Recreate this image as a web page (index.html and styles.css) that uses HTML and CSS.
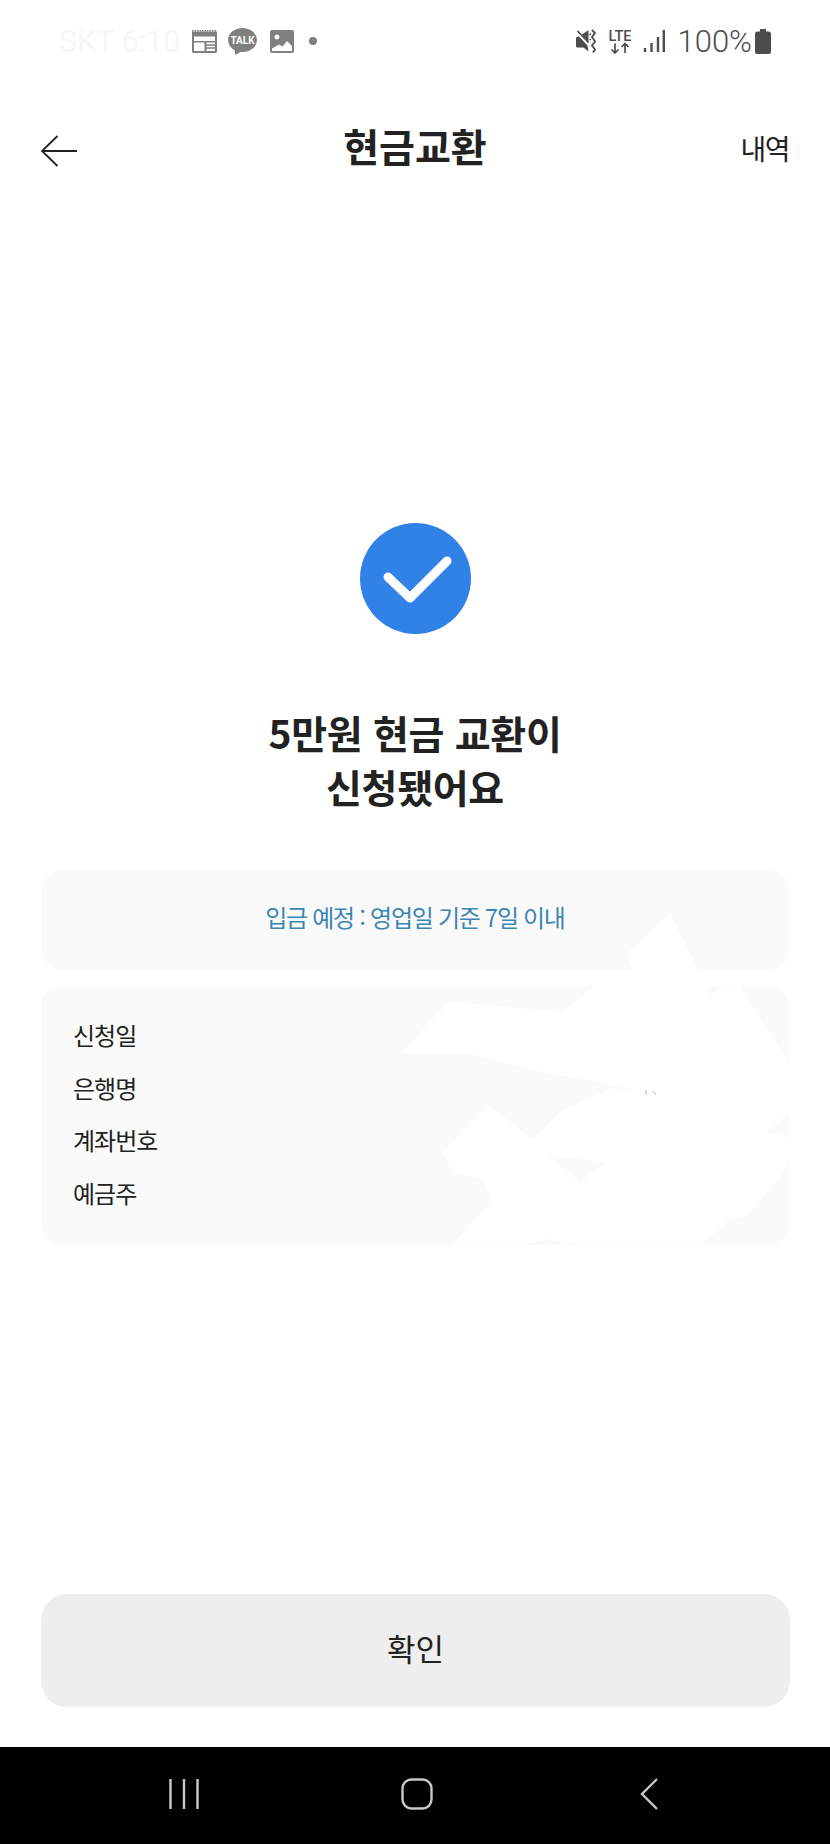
FILE: index.html
```html
<!DOCTYPE html>
<html lang="ko">
<head>
<meta charset="UTF-8">
<meta name="viewport" content="width=device-width, initial-scale=1.0">
<title>현금교환</title>
<link rel="stylesheet" href="styles.css">
</head>
<body>
<div class="screen">
  <div class="status-bar">
    <div class="status-left">
      <span class="carrier">SKT 6:10</span>
      <svg class="ic-cal" width="25" height="23" viewBox="0 0 25 23"><path fill="none" stroke="#808080" stroke-width="1.500" stroke-dasharray="1.500 1" d="M0 .8h25"/><path fill="#808080" fill-rule="evenodd" d="M0 1.500h25v20a1.500 1.500 0 0 1-1.500 1.500h-22A1.500 1.500 0 0 1 0 21.500zM2 6.500v4.500h21V6.500zM2 12.500v8.500h10.500v-8.500zM14.500 12.500v1.800H23v-1.800zM14.500 15.800v1.500H23v-1.500zM14.500 18.800V21H23v-2.200z"/></svg>
      <svg class="ic-talk" width="29" height="27" viewBox="0 0 29 27"><ellipse cx="14.500" cy="12" rx="14.500" ry="12" fill="#808080"/><path fill="#808080" d="M6 20l1.500 7 7-4.500z"/><text x="14.500" y="16" text-anchor="middle" class="talk">TALK</text></svg>
      <svg class="ic-img" width="24" height="23" viewBox="0 0 24 23"><path fill="#808080" fill-rule="evenodd" d="M2 0h20a2 2 0 0 1 2 2v19a2 2 0 0 1-2 2H2a2 2 0 0 1-2-2V2a2 2 0 0 1 2-2zM7 4.500a2.500 2.500 0 1 0 0 5 2.500 2.500 0 0 0 0-5zM2 21h20v-5l-5-5-4.500 5.500-3.500-2-7 4z"/></svg>
      <span class="dot"></span>
    </div>
    <div class="status-right">
      <svg width="21" height="25" viewBox="0 0 21 25"><path fill="#4d4d4d" d="M0 8.500l3-1 8.500 9 1 6-5-4H1.500A1.500 1.500 0 0 1 0 17zM6 5.500L12.500 1v13z"/><path fill="none" stroke="#4d4d4d" stroke-width="1.800" d="M1.500 2l11 11.500M16 1l3 3-3 4 3 4.500-3 4 3 4-2 3"/><path fill="none" stroke="#4d4d4d" stroke-width="1.500" d="M13.500 6l1.500-1.500M13.500 10l1.500 1"/></svg>
      <svg width="22" height="25" viewBox="0 0 22 25"><text x="11" y="12" text-anchor="middle" class="lte">LTE</text><path fill="none" stroke="#4d4d4d" stroke-width="1.700" d="M6 14.500V24M2.500 20.500L6 24l3.500-3.500M16 24v-9.500M12.500 18l3.500-3.500 3.500 3.500"/></svg>
      <svg width="22" height="24" viewBox="0 0 22 24"><path stroke="#4d4d4d" stroke-width="2.400" d="M2 19v4M8.500 14v9M15 8v15M20.800 1v22"/></svg>
      <span class="battery-text">100%</span>
      <svg class="battery" width="16" height="25" viewBox="0 0 16 25"><path fill="#4d4d4d" d="M5 0h6v2.500h2.500A2.500 2.500 0 0 1 16 5v17.500a2.500 2.500 0 0 1-2.500 2.500h-11A2.500 2.500 0 0 1 0 22.500V5a2.500 2.500 0 0 1 2.500-2.500H5z"/></svg>
    </div>
  </div>

  <div class="app-bar">
    <svg class="back" width="36" height="32" viewBox="0 0 36 32"><path fill="none" stroke="#222" stroke-width="1.800" d="M36 16H1M16.500 1L1 16l15.500 15"/></svg>
    <h1 class="title">현금교환</h1>
    <span class="history">내역</span>
  </div>

  <main class="content">
    <svg class="check" width="111" height="111" viewBox="0 0 111 111"><circle cx="55.500" cy="55.500" r="55.500" fill="#3182e6"/><path fill="none" stroke="#fff" stroke-width="9" stroke-linecap="round" stroke-linejoin="round" d="M28 54l22 21 37-37"/></svg>
    <h2 class="message">5만원 현금 교환이<br>신청됐어요</h2>
    <div class="card notice">입금 예정 : 영업일 기준 7일 이내</div>
    <div class="card info">
      <div class="row">신청일</div>
      <div class="row">은행명</div>
      <div class="row">계좌번호</div>
      <div class="row">예금주</div>
    </div>
    <!-- 가려진 부분 -->
    <svg class="redact" width="400" height="370" viewBox="0 0 400 370"><path fill="#fff" fill-rule="evenodd" d="M270 23L228 63l5 17-41 17-29 25-113-10L1 163h66l66 17 80 15 32 7-32-4-53 24-27 28-45-35-46 47 11 21 30 5 10 22-40 44h70l179 0 26-24 19-5 36-42 7-20v-15l-23-6 23-20v-49l-50-76h-18l-12 8-2-8-10-17zM147 265l60 7-27 20z"/><path fill="#fafafa" d="M123 355l24-6 33 6z"/><path fill="none" stroke="#b5b5b5" d="M246 200v5M253 201l3 4"/></svg>
  </main>

  <button class="confirm">확인</button>

  <nav class="nav-bar">
    <svg width="30" height="32" viewBox="0 0 30 32"><path stroke="#c8c8c8" stroke-width="2.400" d="M1.500 1v30M15 1v30M28.500 1v30"/></svg>
    <svg width="32" height="32" viewBox="0 0 32 32"><rect x="1.500" y="1.500" width="29" height="29" rx="9" fill="none" stroke="#c8c8c8" stroke-width="2.400"/></svg>
    <svg class="nav-back" width="18" height="32" viewBox="0 0 18 32"><path fill="none" stroke="#c8c8c8" stroke-width="2.400" d="M17 1L2 16l15 15"/></svg>
  </nav>
</div>
</body>
</html>
```

FILE: styles.css
```css
* {
  box-sizing: border-box;
}
html, body {
  margin: 0;
  padding: 0;
}
body {
  font-family: "Noto Sans CJK KR", "Noto Sans", sans-serif;
  background: #fff;
  color: #222;
}
.screen {
  width: 830px;
  height: 1844px;
  display: flex;
  flex-direction: column;
  overflow: hidden;
}

/* status bar */
.status-bar {
  height: 82px;
  padding: 0 59px;
  display: flex;
  justify-content: space-between;
  align-items: center;
}
.status-left, .status-right {
  display: flex;
  align-items: center;
}
.carrier {
  font-family: Roboto, sans-serif;
  font-size: 30.500px;
  color: #f6f6f6;
  width: 133px;
}
.ic-cal {
  margin-right: 11px;
}
.ic-talk {
  margin-right: 13px;
}
.talk {
  font-family: Roboto, sans-serif;
  font-size: 10px;
  font-weight: 700;
  fill: #fff;
}
.dot {
  width: 8px;
  height: 8px;
  margin-left: 15px;
  border-radius: 50%;
  background: #808080;
}
.status-right {
  gap: 12px;
}
.lte {
  font-family: Roboto, sans-serif;
  font-size: 14.500px;
  font-weight: 500;
  fill: #4d4d4d;
}
.battery-text {
  font-family: Roboto, sans-serif;
  font-size: 31px;
  font-weight: 300;
  color: #4d4d4d;
}
.battery {
  margin-left: -9px;
}

/* app bar */
.app-bar {
  height: 70px;
  margin-top: 32px;
  padding: 0 41px;
  display: grid;
  grid-template-columns: 1fr auto 1fr;
  align-items: center;
}
.back {
  margin-top: 4px;
}
.title {
  margin: 0 0 8px;
  font-size: 39px;
  font-weight: 700;
  color: #222;
}
.history {
  justify-self: end;
  margin-bottom: 2px;
  font-size: 28px;
  letter-spacing: -1.500px;
}

/* content */
.content {
  position: relative;
  flex: 1;
  padding: 339px 41px 0;
  display: flex;
  flex-direction: column;
  align-items: center;
}
.check {
  flex: none;
}
.message {
  margin: 71px 0 0;
  font-size: 39px;
  line-height: 54px;
  font-weight: 700;
  letter-spacing: -.3px;
  text-align: center;
  color: #222;
}
.card {
  width: 100%;
  background: #fafafa;
  border-radius: 20px;
}
.notice {
  margin-top: 57px;
  height: 100px;
  padding-bottom: 8px;
  display: flex;
  align-items: center;
  justify-content: center;
  font-size: 24px;
  letter-spacing: -1.300px;
  color: #3a86b5;
}
.info {
  margin-top: 16px;
  height: 259px;
  padding: 23px 32px;
}
.row {
  height: 52.500px;
  line-height: 52.500px;
  font-size: 24px;
  letter-spacing: -1px;
  color: #222;
}
.redact {
  position: absolute;
  left: 400px;
  top: 706px;
}

/* bottom */
.confirm {
  width: 749px;
  height: 113px;
  margin: 0 0 40px 41px;
  padding-bottom: 8px;
  flex: none;
  border: none;
  border-radius: 26px;
  background: #eee;
  font-family: inherit;
  font-size: 31px;
  color: #222;
}
.nav-bar {
  height: 97px;
  flex: none;
  background: #000;
  display: flex;
  align-items: center;
  gap: 202px;
  padding: 0 0 3px 169px;
}
.nav-back {
  margin-left: 5px;
}
```
